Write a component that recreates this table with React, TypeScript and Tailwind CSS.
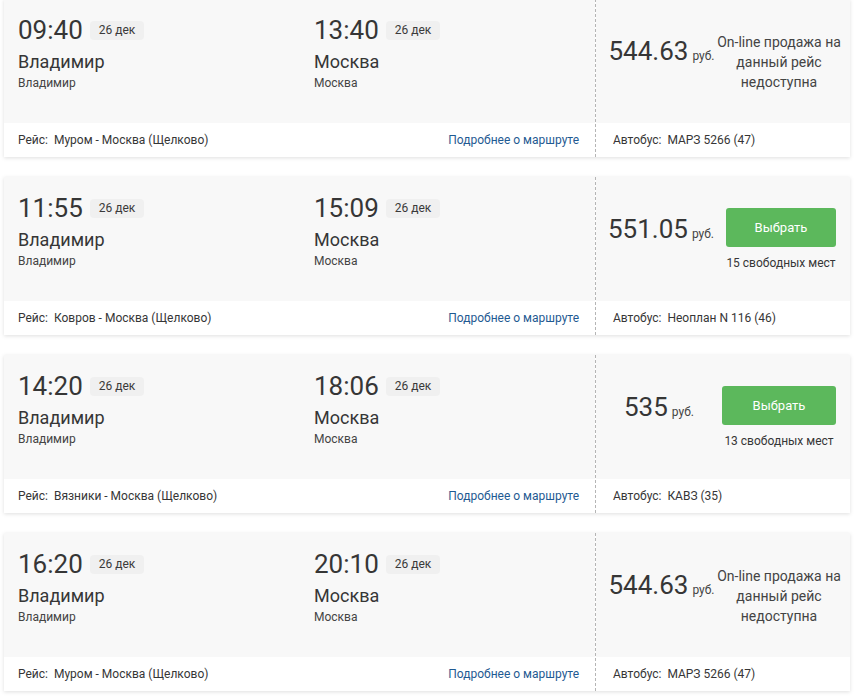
import React from "react";

type Trip = {
  dep: string;
  arr: string;
  price: string;
  seats?: string;
  route: string;
  bus: string;
  actionW: number;
  actionMr: number;
  pricePl: number;
};

const trips: Trip[] = [
  { dep: "09:40", arr: "13:40", price: "544.63", route: "Муром - Москва (Щелково)", bus: "МАРЗ 5266 (47)", actionW: 126, actionMr: 8, pricePl: 11 },
  { dep: "11:55", arr: "15:09", price: "551.05", seats: "15 свободных мест", route: "Ковров - Москва (Щелково)", bus: "Неоплан N 116 (46)", actionW: 110, actionMr: 14, pricePl: 0 },
  { dep: "14:20", arr: "18:06", price: "535", seats: "13 свободных мест", route: "Вязники - Москва (Щелково)", bus: "КАВЗ (35)", actionW: 114, actionMr: 14, pricePl: 0 },
  { dep: "16:20", arr: "20:10", price: "544.63", route: "Муром - Москва (Щелково)", bus: "МАРЗ 5266 (47)", actionW: 126, actionMr: 8, pricePl: 11 },
];

function Point({ time, city }: { time: string; city: string }) {
  return (
    <div className="flex flex-col">
      <div className="flex items-center">
        <span className="text-[26px] leading-[30px] text-[#363636]">{time}</span>
        <span className="ml-[7px] h-[19px] rounded-[4px] bg-[#f0f0f0] px-[9px] text-[12px] leading-[19px] text-[#3a3a3a]">26 дек</span>
      </div>
      <div className="mt-[5px] text-[18px] leading-[24px] text-[#363636]">{city}</div>
      <div className="mt-[1px] text-[12px] leading-[16px] text-[#444]">{city}</div>
    </div>
  );
}

function Card({ t }: { t: Trip }) {
  return (
    <div className="ml-[4px] flex h-[158px] w-[846px] bg-white shadow-[0_1px_4px_rgba(0,0,0,0.13)]">
      <div className="flex w-[591px] flex-col">
        <div className="flex h-[124px] bg-[#f8f8f8] pl-[14px] pt-[16px]">
          <div className="w-[296px]">
            <Point time={t.dep} city="Владимир" />
          </div>
          <div>
            <Point time={t.arr} city="Москва" />
          </div>
        </div>
        <div className="flex h-[34px] items-center justify-between pl-[14px] pr-[16px] text-[12px]">
          <span className="text-[#363636]">Рейс:&nbsp; {t.route}</span>
          <span className="text-[#1f5a92]">Подробнее о маршруте</span>
        </div>
      </div>
      <div className="flex flex-1 flex-col border-l border-dashed border-[#b5b5b5]">
        <div className="flex h-[124px] bg-[#f8f8f8]">
          <div className="flex flex-1 justify-center pt-[37px]" style={{ paddingLeft: t.pricePl }}>
            <div className="flex items-baseline whitespace-nowrap">
              <span className="text-[26px] leading-[30px] text-[#363636]">{t.price}</span>
              <span className="ml-[4px] text-[12px] text-[#444]">руб.</span>
            </div>
          </div>
          <div className="flex flex-col items-center justify-center pt-[1px]" style={{ width: t.actionW, marginRight: t.actionMr }}>
            {t.seats ? (
              <>
                <div className="flex h-[39px] w-full items-center justify-center rounded-[3px] bg-[#5cb85c] text-[13px] text-white">Выбрать</div>
                <div className="mt-[8px] whitespace-nowrap text-[12px] leading-[16px] text-[#363636]">{t.seats}</div>
              </>
            ) : (
              <div className="whitespace-nowrap text-center text-[14px] leading-[20px] text-[#444]">
                On-line продажа на
                <br />
                данный рейс
                <br />
                недоступна
              </div>
            )}
          </div>
        </div>
        <div className="flex h-[34px] items-center pl-[17px] text-[12px] text-[#363636]">Автобус:&nbsp; {t.bus}</div>
      </div>
    </div>
  );
}

export default function App() {
  return (
    <div className="h-[696px] w-[866px] overflow-hidden bg-white" style={{ fontFamily: "Roboto, 'Noto Sans', sans-serif" }}>
      <div className="-mt-[1px] flex flex-col gap-[20px]">
        {trips.map((t, i) => (
          <Card key={i} t={t} />
        ))}
      </div>
    </div>
  );
}
